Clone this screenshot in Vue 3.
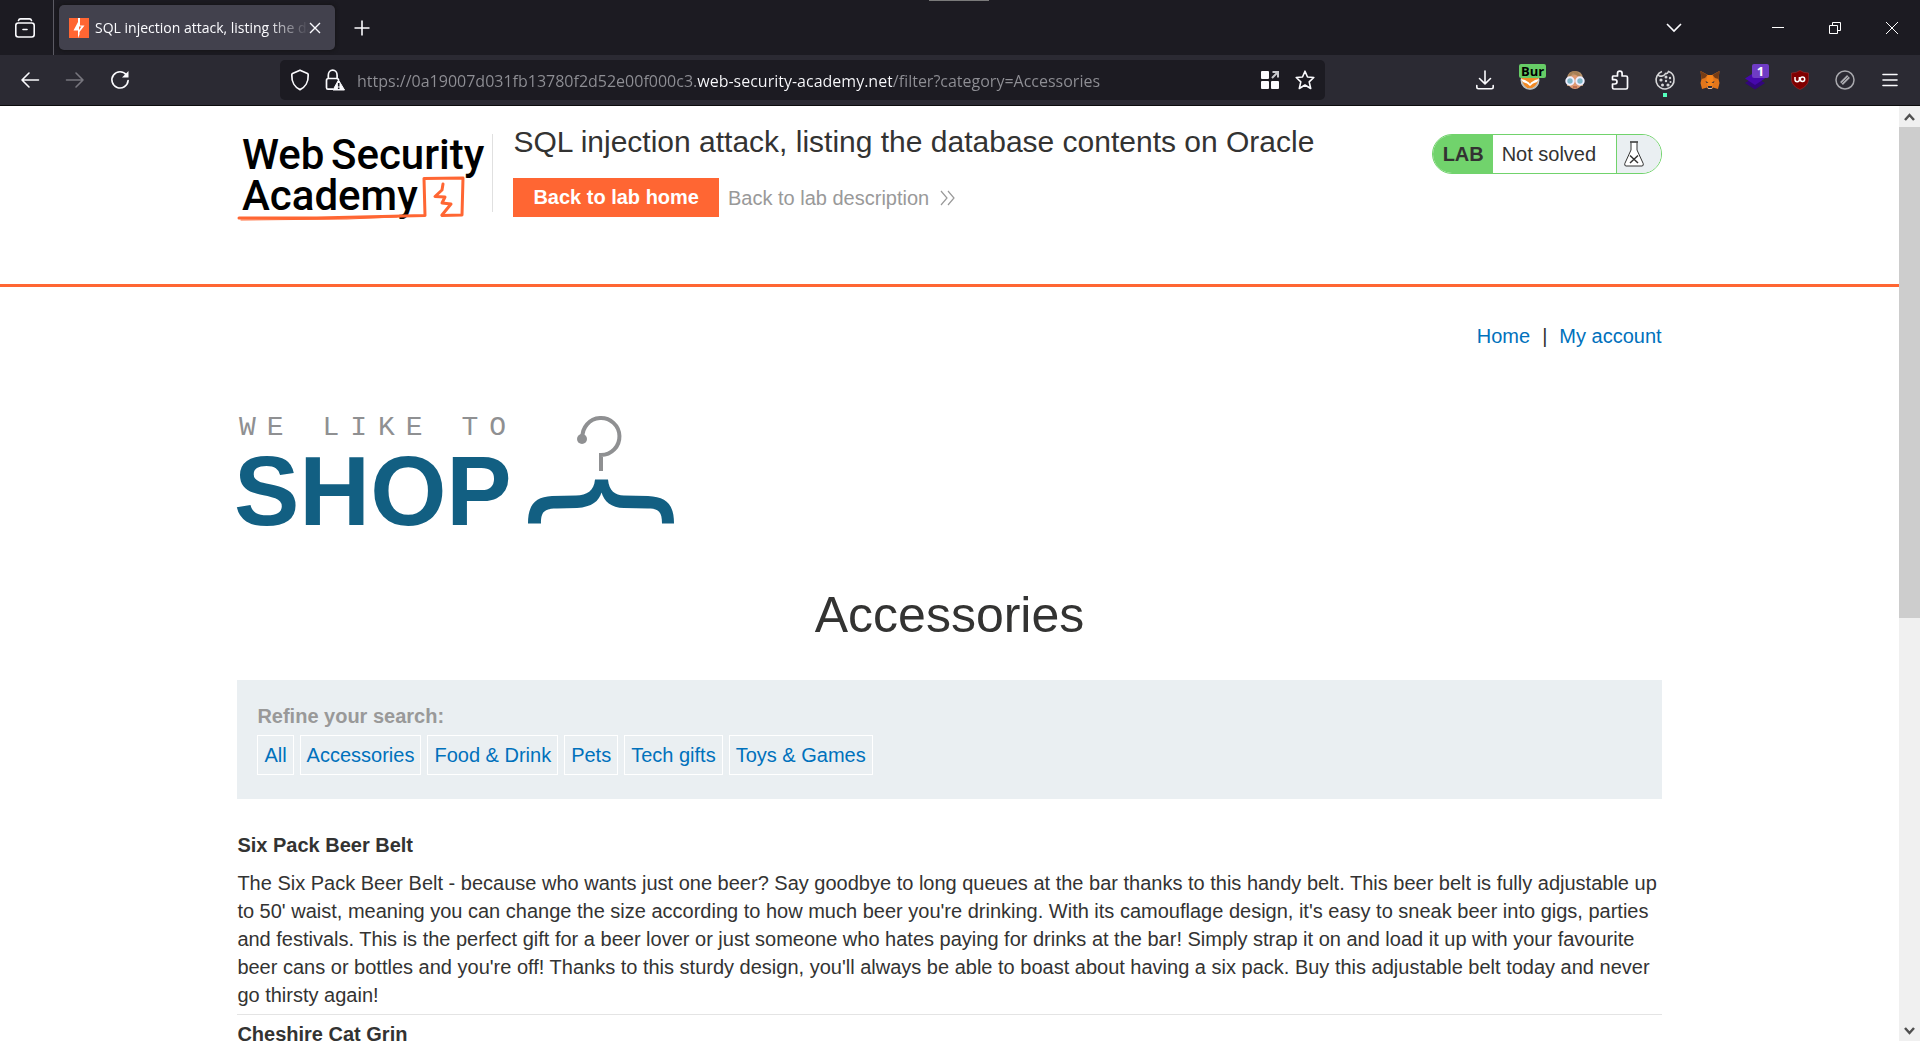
<script setup>
import { ref } from 'vue'

const url = ref('https://0a19007d031fb13780f2d52e00f000c3.web-security-academy.net/filter?category=Accessories')
const categories = ['All', 'Accessories', 'Food & Drink', 'Pets', 'Tech gifts', 'Toys & Games']
const products = [
  {
    name: 'Six Pack Beer Belt',
    text: "The Six Pack Beer Belt - because who wants just one beer? Say goodbye to long queues at the bar thanks to this handy belt. This beer belt is fully adjustable up to 50' waist, meaning you can change the size according to how much beer you're drinking. With its camouflage design, it's easy to sneak beer into gigs, parties and festivals. This is the perfect gift for a beer lover or just someone who hates paying for drinks at the bar! Simply strap it on and load it up with your favourite beer cans or bottles and you're off! Thanks to this sturdy design, you'll always be able to boast about having a six pack. Buy this adjustable belt today and never go thirsty again!"
  },
  { name: 'Cheshire Cat Grin', text: '' }
]
</script>

<template>
  <div class="browser">
    <header class="tabbar">
      <div class="grip"></div>
      <button class="view" aria-label="Firefox View">
        <svg width="20" height="20" viewBox="0 0 20 20" fill="none" stroke="#fbfbfe" stroke-width="1.6" stroke-linecap="round" stroke-linejoin="round"><path d="M3.5 2.5Q4 .9 5.500.9H14.500Q16 .9 16.500 2.500" /><rect x=".8" y="5" width="18.400" height="14" rx="2.500" /><path d="M8 11.500H12" /></svg>
      </button>
      <div class="tab">
        <svg width="20" height="20" viewBox="0 0 20 20"><path fill="#ff6633" d="M0 0H20V20H0z" /><path fill="#fff" d="M9 0H11V7.500H15.500L10.500 14V16.500L9 20V12.500H4.500L9 4z" /><path fill="#ff6633" d="M10 8.500L12.500 8.500 10 12 z" /></svg>
        <span class="tab-title">SQL injection attack, listing the database</span>
        <button class="close-tab" aria-label="Close tab">
          <svg width="12" height="12" viewBox="0 0 12 12" stroke="#fbfbfe" stroke-width="1.4"><path d="M1 1L11 11M11 1L1 11" /></svg>
        </button>
      </div>
      <button class="new-tab" aria-label="New tab">
        <svg width="16" height="16" viewBox="0 0 16 16" stroke="#fbfbfe" stroke-width="1.6"><path d="M8 .500V15.500M.500 8H15.500" /></svg>
      </button>
      <div class="window">
        <button class="list" aria-label="List all tabs"><svg width="16" height="10" viewBox="0 0 16 10" fill="none" stroke="#fbfbfe" stroke-width="1.6"><path d="M1 1L8 8L15 1" /></svg></button>
        <button aria-label="Minimize"><svg width="12" height="12" viewBox="0 0 12 12" fill="none" stroke="#fff"><path d="M0 5.500H12" /></svg></button>
        <button aria-label="Restore"><svg width="12" height="12" viewBox="0 0 12 12" fill="none" stroke="#fff"><path d="M.500 3.500H8.500V11.500H.500zM3.500 3.500V.500H11.500V8.500H8.500" /></svg></button>
        <button aria-label="Close"><svg width="14" height="14" viewBox="0 0 14 14" fill="none" stroke="#fff"><path d="M1 1L13 13M13 1L1 13" /></svg></button>
      </div>
    </header>

    <nav class="toolbar">
      <div class="history">
        <button aria-label="Back"><svg width="20" height="18" viewBox="0 0 20 18" fill="none" stroke="#fbfbfe" stroke-width="1.6" stroke-linecap="round" stroke-linejoin="round"><path d="M18.500 9H2M9 2L2 9L9 16" /></svg></button>
        <button aria-label="Forward" disabled><svg width="20" height="18" viewBox="0 0 20 18" fill="none" stroke="#77767e" stroke-width="1.6" stroke-linecap="round" stroke-linejoin="round"><path d="M1.500 9H18M11 2L18 9L11 16" /></svg></button>
        <button aria-label="Reload"><svg width="20" height="20" viewBox="0 0 20 20" fill="none"><path d="M16.500 5A8.100 8.100 0 1 0 18.100 10.500" stroke="#fbfbfe" stroke-width="1.700" stroke-linecap="round" /><path d="M18.500 1V7.500H12z" fill="#fbfbfe" /></svg></button>
      </div>
      <div class="urlbar">
        <button aria-label="Tracking protection"><svg width="20" height="22" viewBox="0 0 20 22" fill="none" stroke="#fbfbfe" stroke-width="1.700" stroke-linejoin="round"><path d="M10 1.200L17.500 4.500Q18.300 5 18.200 6C18.500 13 15 18.500 10 20.600C5 18.500 1.500 13 1.800 6Q1.700 5 2.500 4.500z" /></svg></button>
        <button aria-label="Site security"><svg width="20" height="22" viewBox="0 0 20 22" fill="none"><path d="M8 20.200H3Q1.500 20.200 1.500 18.500V11.500Q1.500 9.500 3.500 9.500H11.500Q13.500 9.500 13.500 11M3.300 9.500V6.200A4.400 5 0 0 1 12.100 6.200V9.500" stroke="#fbfbfe" stroke-width="1.700" /><path d="M13.500 11L19.500 21H8z" fill="#fbfbfe" stroke="#fbfbfe" stroke-linejoin="round" /><path d="M13.700 14V17.500M13.700 18.500V20" stroke="#1c1b22" stroke-width="1.600" /></svg></button>
        <input v-model="url" class="address" type="text" aria-label="Address" spellcheck="false" />
        <button aria-label="Add search shortcut"><svg width="18" height="20" viewBox="0 0 18 20"><g fill="#fbfbfe"><rect y="1" width="8" height="8" rx="1" /><rect y="11" width="8" height="8" rx="1" /><rect x="10" y="11" width="8" height="8" rx="1" /></g><path fill="none" stroke="#c8c8cc" stroke-width="2" d="M11.500 2H17V7.500M17 2L11 8" /></svg></button>
        <button aria-label="Bookmark this page"><svg width="20" height="20" viewBox="0 0 20 20" fill="none" stroke="#fbfbfe" stroke-width="1.600" stroke-linejoin="round"><path d="M10 1.200L12.500 7L18.800 7.500L14.200 11.800L15.700 18.500L10 15L4.300 18.500L5.800 11.800L1.200 7.500L7.500 7z" /></svg></button>
      </div>
      <div class="extensions">
        <button aria-label="Downloads"><svg width="20" height="20" viewBox="0 0 20 20" fill="none" stroke="#fbfbfe" stroke-width="1.600" stroke-linecap="round" stroke-linejoin="round"><path d="M10 1V13.500M4.500 8.500L10 13.800L15.500 8.500M1.800 15.500V17Q1.800 18.700 3.500 18.700H16.500Q18.200 18.700 18.200 17V15.500" /></svg></button>
        <button aria-label="FoxyProxy"><svg width="20" height="20" viewBox="0 0 20 20"><circle cx="10" cy="10" r="9.500" fill="#c9cbc9" /><path fill="#f28a25" d="M1 4H19L18 11Q16 18 10 18.500Q4 18 2 11z" /><path fill="#fff" d="M1 9L5 10L9 12.500L10 14L11 12.500L15 10L19 9L17 12L13 13.500L10 16L7 13.500L3 12z" /><path fill="none" stroke="#b9bcbb" stroke-width="1.500" d="M2 13Q4 19 10 19Q16 19 18 13" /></svg><span class="badge green">Bur</span></button>
        <button aria-label="User agent"><svg width="20" height="20" viewBox="0 0 20 20"><path fill="#b7926a" d="M2 16V8Q3 1 10 1Q17 1 18 8V16z" /><ellipse cx="10" cy="12" rx="7" ry="7" fill="#df9a72" /><path fill="#a77f54" d="M3 8Q6 6 8 3L16 8Q15 2 10 1Q4 1 3 8" /><g fill="#7fb6c8" stroke="#eef" stroke-width="2"><circle cx="5" cy="11" r="3.700" /><circle cx="15" cy="11" r="3.700" /></g><path stroke="#a34a38" d="M8 17H12" /></svg></button>
        <button aria-label="Extensions"><svg width="20" height="20" viewBox="0 0 20 20" fill="none" stroke="#fbfbfe" stroke-width="1.700" stroke-linejoin="round"><path d="M3 6H7.500V3.500A2.300 2.300 0 0 1 12.100 3.500V6H16Q17.500 6 17.500 7.500V17.500Q17.500 19 16 19H4Q2.500 19 2.500 17.500V14H4.800A2.200 2.200 0 0 0 4.800 9.600H2.500V7Q2.500 6 3 6" /></svg></button>
        <button aria-label="Cookies"><svg width="20" height="20" viewBox="0 0 20 20"><path fill="none" stroke="#d6d6d8" stroke-width="1.600" d="M7 1.500A9 9 0 1 0 19 9Q19 3.500 13.500 1.500Q12.500 4 10.500 3.500Q9 6.500 6 6Q3 6.500 3.500 4" /><g fill="#d6d6d8"><circle cx="11" cy="7" r="1.500" /><circle cx="6" cy="10" r="1.600" /><circle cx="15" cy="8" r="1.200" /><circle cx="11" cy="11" r="1.200" /><circle cx="7.500" cy="15" r="1.500" /><circle cx="13" cy="15" r="1.600" /><circle cx="15.500" cy="12" r="1" /></g></svg><span class="dot"></span></button>
        <button aria-label="MetaMask"><svg width="20" height="20" viewBox="0 0 20 20"><path fill="#e2761b" d="M.500 1L8 5H12L19.500 1L18.500 9L19.500 13L18 19L13 17.500L12 19H8L7 17.500L2 19L.500 13L1.500 9z" /><path fill="#763d16" d="M.500 1L7.500 5L5 8L1.500 9zM19.500 1L12.500 5L15 8L18.500 9z" /><path fill="#f6851b" d="M7.500 5H12.500L14 12L12 16H8L6 12z" /><path fill="#2b2b3a" d="M5.500 11L8.500 12.500L6.500 13zM14.500 11L11.500 12.500L13.500 13zM8 16H12V18H8z" /><path fill="#d7c1b3" d="M7 16.500L8.500 19H11.500L13 16.500L11.500 18H8.500z" /></svg></button>
        <button aria-label="Wappalyzer"><svg width="20" height="20" viewBox="0 0 20 20"><path fill="#32067c" d="M0 13L10 7L20 13L10 19.500z" /><path fill="#4608ad" d="M0 8.500L10 2L20 8.500L10 15z" /></svg><span class="badge purple">1</span></button>
        <button aria-label="uBlock Origin"><svg width="20" height="20" viewBox="0 0 20 20"><path fill="#800000" stroke="#a33" stroke-width=".5" d="M10 .500Q13.500 3 18.500 3V10Q18 16 10 19.500Q2 16 1.500 10V3Q6.500 3 10 .500" /><path fill="none" stroke="#fff" stroke-width="1.500" d="M5 7V9.500A2.200 2.200 0 0 0 9.400 9.500V7" /><circle cx="12.500" cy="9.300" r="2.200" fill="none" stroke="#fff" stroke-width="1.500" /></svg></button>
        <button aria-label="Edit styles"><svg width="20" height="20" viewBox="0 0 20 20" fill="none" stroke="#a9a9ae" stroke-width="1.500"><circle cx="10" cy="10" r="9" /><path d="M6.500 13.500L13.500 6.500" stroke-width="4" /><path d="M6 14L14 6" stroke="#55545c" stroke-width="1" /></svg></button>
        <button aria-label="Menu"><svg width="20" height="20" viewBox="0 0 20 20" stroke="#fbfbfe" stroke-width="1.600" stroke-linecap="round"><path d="M3 4.500H17M3 10H17M3 15.500H17" /></svg></button>
      </div>
    </nav>

    <div class="viewport">
      <div class="page">
        <section class="lab-header">
          <div class="container lab-row">
            <a href="#" class="logo" aria-label="Web Security Academy">
              <svg width="256" height="92" viewBox="0 0 256 92">
                <text class="wordmark" x="5" y="39">Web</text>
                <text class="wordmark" x="94" y="39">Security</text>
                <text class="wordmark" x="5" y="80">Academy</text>
                <g fill="none" stroke="#ff6633" stroke-linejoin="round" stroke-linecap="round">
                  <path stroke-width="3" d="M2 88L80 88L188 85.500L187 48.500L226 48L225 85L205 85.500" />
                  <path stroke-width="1" d="M4 90L110 89L160 87" />
                  <path stroke-width="3" d="M206 54L205 60L198 66.500L208 67L205 73L214 74L205 85" />
                </g>
              </svg>
            </a>
            <div class="lab-info">
              <h2>SQL injection attack, listing the database contents on Oracle</h2>
              <div class="actions">
                <a href="#" class="home-button">Back to lab home</a>
                <a href="#" class="description">Back to lab description
                  <svg width="15" height="16" viewBox="0 0 15 16" fill="none" stroke="#999" stroke-width="1.200"><path d="M1 1L7 8L1 15M8 1L14 8L8 15" /></svg>
                </a>
              </div>
            </div>
            <div class="status">
              <span class="status-lab">LAB</span>
              <span class="status-text">Not solved</span>
              <span class="status-icon"><svg width="20" height="26" viewBox="0 0 20 26" fill="#fff" stroke="#333332"><path d="M7 1.500V9L.800 22.500Q.200 25 2 25H18Q19.800 25 19.200 22.500L13 9V1.500" /><path stroke-width="1.500" d="M6 1H14M6 14.500L14 22M14 14.500L6 22" /></svg></span>
            </div>
          </div>
        </section>

        <main class="container">
          <nav class="links"><a href="#">Home</a><span>|</span><a href="#">My account</a></nav>
          <svg class="shop" width="440" height="116" viewBox="0 0 440 116" role="img" aria-label="We like to shop">
            <text class="tagline" x="2" y="22">WE LIKE TO</text>
            <text class="brand" x="-3" y="112">SHOP</text>
            <circle cx="345" cy="26" r="5" fill="#8f9092" />
            <path fill="none" stroke="#8f9092" stroke-width="4" d="M345.500 25A18.500 18.500 0 1 1 364 42V58" />
            <path fill="#125f82" d="M358 66.500H371C372 78 378 82 387 82.500L411 83C430 84 437 92 437 110.500H425C425 99 422 95.500 411 95.500L387 95C374 95 367 88 364.500 79.500C362 88 355 94 340 95L320 95.500C307 95.500 304 99 304 110.500H291C291 92 298 84 315 83L339 82.500C350 82 357 78 358 66.500z" />
          </svg>
          <h1>Accessories</h1>
          <section class="filters">
            <span class="filters-title">Refine your search:</span>
            <div class="filter-list"><a v-for="c in categories" :key="c" href="#">{{ c }}</a></div>
          </section>
          <article v-for="p in products" :key="p.name">
            <h3>{{ p.name }}</h3>
            <p v-if="p.text">{{ p.text }}</p>
          </article>
        </main>
      </div>
      <div class="scrollbar">
        <button aria-label="Scroll up"><svg width="11" height="8" viewBox="0 0 11 8" fill="none" stroke="#505050" stroke-width="2.500"><path d="M1 7L5.500 2L10 7" /></svg></button>
        <div class="track"><div class="thumb"></div></div>
        <button aria-label="Scroll down"><svg width="11" height="8" viewBox="0 0 11 8" fill="none" stroke="#505050" stroke-width="2.500"><path d="M1 1L5.500 6L10 1" /></svg></button>
      </div>
    </div>
  </div>
</template>

<style>
body {
  overflow: hidden;
}
</style>

<style scoped>
* {
  box-sizing: border-box;
}
button {
  display: flex;
  align-items: center;
  justify-content: center;
  padding: 0;
  border: 0;
  background: none;
  font: inherit;
  color: inherit;
}
svg {
  display: block;
  flex: none;
  overflow: visible;
}
a {
  color: #0071bc;
  text-decoration: none;
}
.browser {
  display: flex;
  flex-direction: column;
  height: 100vh;
  background: #fff;
  font-family: "Liberation Sans", Arial, sans-serif;
  font-size: 20px;
  line-height: 28px;
  color: #333332;
}

/* browser chrome */
.tabbar {
  position: relative;
  display: flex;
  flex: none;
  align-items: center;
  height: 55px;
  background: #1c1b22;
  font-family: "Open Sans", "Noto Sans", sans-serif;
  font-size: 14px;
  color: #fbfbfe;
}
.grip {
  position: absolute;
  top: 0;
  left: calc(50% - 31px);
  width: 60px;
  height: 1px;
  background: #7a7a7a;
}
.view {
  width: 54px;
  height: 100%;
  padding-right: 4px;
  border-right: 1px solid #5b5a63;
}
.tab {
  display: flex;
  align-items: center;
  width: 276px;
  height: 45px;
  margin-left: 5px;
  padding: 0 14px 0 10px;
  border-radius: 5px;
  background: #42414d;
  box-shadow: 0 0 4px #111;
}
.tab-title {
  flex: 1;
  margin-left: 6px;
  overflow: hidden;
  white-space: nowrap;
  mask-image: linear-gradient(90deg, #000 80%, transparent);
}
.new-tab {
  width: 54px;
  height: 40px;
}
.window {
  display: flex;
  height: 53px;
  margin-left: auto;
}
.window button {
  width: 57px;
}
.window .list {
  margin-right: 47px;
}
.toolbar {
  display: flex;
  flex: none;
  align-items: center;
  height: 51px;
  border-bottom: 1px solid #0c0c0d;
  background: #2b2a33;
}
.history {
  display: flex;
  width: 280px;
  padding-left: 7px;
}
.history button {
  width: 45px;
  height: 40px;
}
.urlbar {
  display: flex;
  flex: 0 1 1045px;
  align-items: center;
  height: 40px;
  padding: 0 3px 0 10px;
  border-radius: 5px;
  background: #1c1b22;
}
.urlbar button {
  flex: none;
  width: 35px;
  height: 34px;
}
.urlbar button:first-child {
  width: 20px;
  margin-right: 7px;
}
.address {
  flex: 1;
  min-width: 0;
  height: 30px;
  margin-left: 5px;
  padding: 2px 0 0;
  border: 0;
  outline: 0;
  background: linear-gradient(90deg, #8f8f95 339px, #fbfbfe 339px 535px, #8f8f95 535px);
  background-clip: text;
  -webkit-text-fill-color: transparent;
  font-family: "Open Sans", "Noto Sans", sans-serif;
  font-size: 16px;
}
.extensions {
  display: flex;
  margin-left: auto;
  padding-right: 8px;
}
.extensions button {
  position: relative;
  width: 45px;
  height: 40px;
}
.badge {
  position: absolute;
  top: 4px;
  left: 12px;
  height: 14px;
  padding: 0 2px;
  border-radius: 2px;
  font: bold 13px/14px "Open Sans", sans-serif;
}
.green {
  background: #66cc66;
  color: #000;
}
.purple {
  left: 20px;
  width: 17px;
  background: #6f3cc4;
  color: #fff;
}
.dot {
  position: absolute;
  bottom: 3px;
  width: 4px;
  height: 4px;
  background: #54ffbd;
}

/* page */
.viewport {
  display: flex;
  flex: 1;
  min-height: 0;
}
.page {
  flex: 1;
  min-width: 0;
  overflow: hidden;
}
.container {
  width: 75%;
  margin: 0 auto;
}
.lab-header {
  height: 181px;
  padding-top: 20px;
  border-bottom: 3px solid #ff6633;
}
.lab-row {
  display: flex;
  align-items: flex-start;
}
.logo {
  flex: none;
  width: 256px;
  height: 78px;
  margin-top: 8px;
  border-right: 1px solid #e0e0e0;
}
.logo svg {
  margin-top: -4px;
}
.wordmark {
  font: 500 42px Roboto, sans-serif;
  fill: #000;
}
.lab-info {
  margin-left: 20px;
}
h2 {
  margin: 0;
  font-size: 30px;
  font-weight: 400;
  line-height: 32px;
}
.actions {
  display: flex;
  align-items: center;
  gap: 9px;
  margin-top: 20px;
}
.home-button {
  padding: 0 20px;
  background: #ff6633;
  color: #fff;
  font-weight: 700;
  line-height: 39px;
}
.description {
  display: flex;
  align-items: center;
  gap: 11px;
  color: #999;
}
.status {
  display: flex;
  height: 40px;
  margin: 8px 0 0 auto;
  border: 1px solid #71d36c;
  border-radius: 20px;
  overflow: hidden;
  line-height: 38px;
}
.status-lab {
  width: 60px;
  padding-left: 10px;
  background: #71d36c;
  font-weight: 700;
}
.status-text {
  width: 123px;
  padding-left: 9px;
}
.status-icon {
  display: flex;
  align-items: center;
  width: 45px;
  padding-left: 7px;
  border-left: 1px solid #71d36c;
  background: #eaeff2;
}
.links {
  display: flex;
  justify-content: flex-end;
  gap: 12px;
  margin-top: 35px;
}
.shop {
  margin-top: 63px;
}
.tagline {
  font: 28px "Liberation Mono", monospace;
  letter-spacing: 11px;
  fill: #8f9092;
}
.brand {
  font: bold 98px "Liberation Sans", Arial, sans-serif;
  fill: #125f82;
}
h1 {
  margin: 56px 0 35px;
  font-size: 50px;
  font-weight: 400;
  line-height: 60px;
  text-align: center;
}
.filters {
  height: 119px;
  margin-bottom: 32px;
  padding: 22px 20px;
  background: #eaeff2;
}
.filters-title {
  color: #999;
  font-weight: 700;
}
.filter-list {
  display: flex;
  gap: 6px;
  margin-top: 5px;
}
.filter-list a {
  padding: 0 6px;
  border: 1px solid #fff;
  line-height: 38px;
}
article {
  border-bottom: 1px solid #e4e4e4;
}
h3 {
  margin: 0;
  font-size: 20px;
  line-height: 28px;
}
p {
  margin: 10px 0 5px;
}
article + article {
  padding-top: 5px;
}
.scrollbar {
  display: flex;
  flex: none;
  flex-direction: column;
  width: 21px;
  background: #f0f0f0;
}
.scrollbar button {
  height: 21px;
}
.track {
  flex: 1;
}
.thumb {
  height: 55%;
  background: #cdcdcd;
}
</style>
